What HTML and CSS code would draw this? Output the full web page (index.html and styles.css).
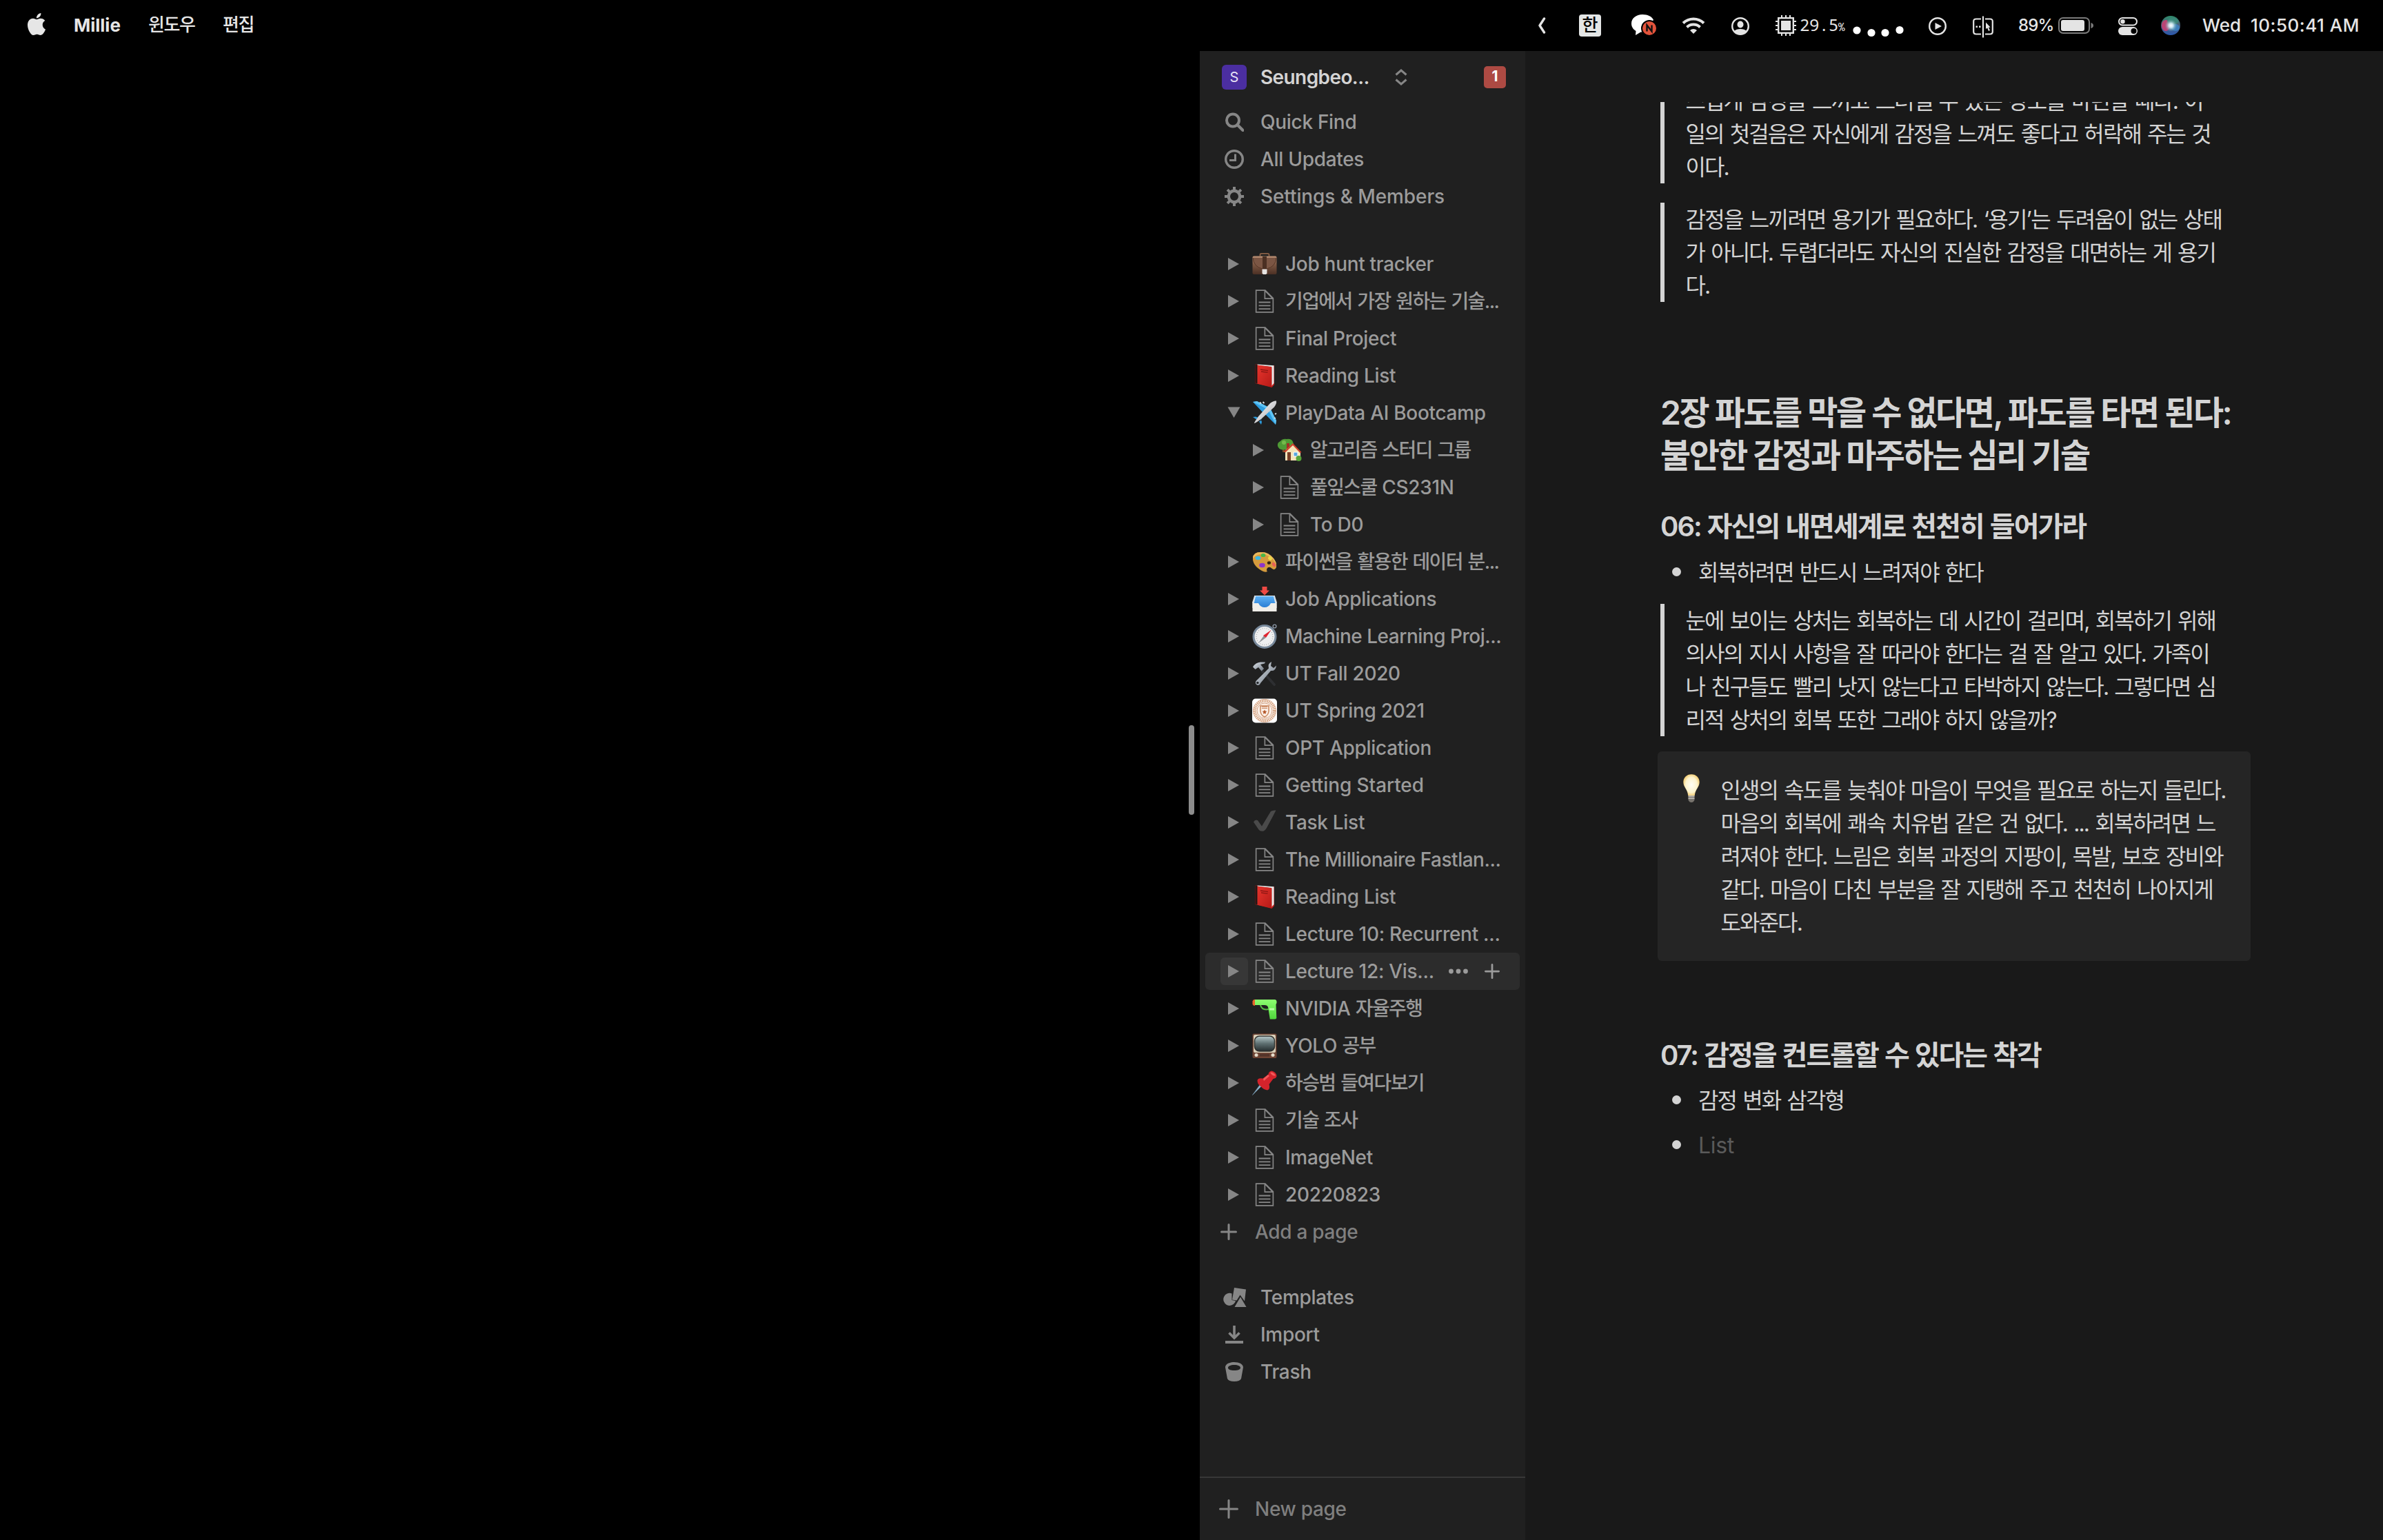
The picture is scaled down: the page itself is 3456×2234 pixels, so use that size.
FILE: index.html
```html
<!DOCTYPE html>
<html lang="ko">
<head>
<meta charset="utf-8">
<title>Millie</title>
<link rel="stylesheet" href="styles.css">
</head>
<body>
<svg class="defs" aria-hidden="true">
  <defs>
    <linearGradient id="g-case" x1="0" y1="0" x2="0" y2="1"><stop offset="0" stop-color="#b98f74"/><stop offset=".45" stop-color="#7d5843"/><stop offset="1" stop-color="#4c3024"/></linearGradient>
    <linearGradient id="g-red" x1="0" y1="0" x2="1" y2="1"><stop offset="0" stop-color="#e8352d"/><stop offset="1" stop-color="#b51a17"/></linearGradient>
    <linearGradient id="g-body" x1="0" y1="0" x2="1" y2="1"><stop offset="0" stop-color="#fff"/><stop offset="1" stop-color="#a9a9ad"/></linearGradient>
    <linearGradient id="g-tray" x1="0" y1="0" x2="0" y2="1"><stop offset="0" stop-color="#5db1f5"/><stop offset="1" stop-color="#2478d0"/></linearGradient>
    <linearGradient id="g-screen" x1="0" y1="0" x2="0" y2="1"><stop offset="0" stop-color="#b7cbcc"/><stop offset=".5" stop-color="#5d6e70"/><stop offset="1" stop-color="#252d2f"/></linearGradient>
    <linearGradient id="g-gun" x1="0" y1="0" x2="0" y2="1"><stop offset="0" stop-color="#8dff70"/><stop offset="1" stop-color="#4fd63c"/></linearGradient>
    <linearGradient id="g-steel" x1="0" y1="0" x2="1" y2="1"><stop offset="0" stop-color="#dfe5ec"/><stop offset="1" stop-color="#6b747f"/></linearGradient>
    <radialGradient id="g-bulb" cx=".5" cy=".5" r=".55"><stop offset="0" stop-color="#fffef4"/><stop offset=".65" stop-color="#fdf3cc"/><stop offset="1" stop-color="#f0c665"/></radialGradient>
    <radialGradient id="g-siri"><stop offset="0" stop-color="#fff"/><stop offset=".35" stop-color="#d7f0fa" stop-opacity=".9"/><stop offset="1" stop-color="#6aa" stop-opacity="0"/></radialGradient>
    <linearGradient id="g-siri-ring" x1="0" y1="0" x2="0" y2="1"><stop offset="0" stop-color="#2f8c6c"/><stop offset=".5" stop-color="#4a5a78"/><stop offset="1" stop-color="#2b5ab0"/></linearGradient>
  </defs>
  <symbol id="page" viewBox="0 0 30 30"><path d="M16 1H4v28h22V11L16 1zm0 2.8L23.2 11H16V3.8zM24 27.6H5.4V2.4h9.2v10H24.600v15.200zM8 17h14v-1.500H8V17zm0 4h14v-1.500H8V21zm0 4h14v-1.500H8V25z"/></symbol>
  <symbol id="closed" viewBox="0 0 40 40"><path d="M11 11l16 9-16 9z"/></symbol>
  <symbol id="open" viewBox="0 0 40 40"><path d="M10.500 11.500h18L19.500 27z"/></symbol>
  <symbol id="plus" viewBox="0 0 24 24"><path d="M12 1.500v21M1.500 12h21" fill="none" stroke="currentColor" stroke-width="3" stroke-linecap="round"/></symbol>
  <symbol id="briefcase" viewBox="0 0 36 36"><path d="M11.500 6.500V4.500Q11.500 2.800 13.500 2.800h9q2 0 2 1.700v2" fill="none" stroke="#8c6147" stroke-width="1.800"/><rect x=".5" y="6.500" width="35" height="26.500" rx="2" fill="url(#g-case)"/><path d="M1 9q1 13 14 16h6q13-3 14-16" fill="#7b5644" stroke="#573727" stroke-width="1"/><path d="M15 7h6v18h-6z" fill="#4b3023"/><path d="M14.500 25.500h7v6l-1.500 1.500h-4l-1.500-1.500z" fill="#e6e4e2"/></symbol>
  <symbol id="book" viewBox="0 0 36 36"><path d="M4.500 1.500l24 2 3.500-.5v28l-3.500 4-24-6z" fill="#c21d19"/><path d="M8 1.500l23.500 1.800V29L28 33V5L6 2.500z" fill="#e3eaea"/><path d="M7 2.500l21.500 3v29L7 29.500z" fill="url(#g-red)"/><path d="M4.500 1.500l3 .5v27.500l-3-1z" fill="#251716"/><path d="M12 9l11 1.600M13 12l9.500 1.400" stroke="#8e1714" stroke-width="1.300"/></symbol>
  <symbol id="plane" viewBox="0 0 36 36"><path d="M1 2l6-1 17 9-7 9zM34 35l1-6-9-18-9 7zM1 24l4-.5 9 3-3 4zM13 35l1-4-4-9-3 4z" fill="#2e9ee0"/><path d="M1 2l6-1 17 9-3 2zM34 35l1-6-9-18-2 4z" fill="#5fc4f5"/><path d="M11 2.500l2 2M15.500 2l2 2M33 20l2-1.500M32 25l2 1" stroke="#d9e0e4" stroke-width="1.800"/><path d="M3 33q0-2 7-11L26 4q5-4 9-3.500.8 4-3 9L14 26Q5 33 3 33z" fill="url(#g-body)"/></symbol>
  <symbol id="house" viewBox="0 0 36 36"><path d="M7 8h3l2 13H8z" fill="#7b4b28"/><path d="M1 12q-1-5 4-7 3-4 9-3 7-1 9 4 3 6-2 9-3 3-9 2-9 2-11-5z" fill="#4f9a35"/><circle cx="10" cy="7" r="3" fill="#75b94b"/><path d="M14 8h4v7l-4 4z" fill="#a22f25"/><path d="M12 18l11-9 11 11v13H12z" fill="#f5e3b8"/><path d="M10 20L23 8l12.500 13-2 1L23 11 12 21.500z" fill="#cf402c"/><path d="M15 21h5v12h-5z" fill="#7a3f26"/><path d="M24 21h6v6h-6z" fill="#5aa7de" stroke="#fff" stroke-width="1"/><circle cx="31.500" cy="30" r="4" fill="#58a438"/></symbol>
  <symbol id="palette" viewBox="0 0 36 36"><path d="M1 12Q2 4 12 4q11-1 19 9 5 7 4 13-2 5-6 2-4-4-7-1-2 3 0 5-3 2-8-1Q0 23 1 12z" fill="#d59b3d"/><path d="M1 12Q2 4 12 4q11-1 19 9 4 5 4 9-5-10-15-14T1 13z" fill="#e9b75c"/><ellipse cx="24.500" cy="19.500" rx="2.600" ry="2.300" fill="#33230f"/><ellipse cx="8.500" cy="12.500" rx="4" ry="2.800" fill="#3db8e4"/><ellipse cx="16" cy="8.500" rx="3.300" ry="2.600" fill="#46b749"/><ellipse cx="26" cy="13" rx="3" ry="2.600" fill="#ecd84a" transform="rotate(40 26 13)"/><ellipse cx="31.500" cy="22" rx="3.500" ry="2.200" fill="#e86056" transform="rotate(55 31.500 22)"/><ellipse cx="14.500" cy="23" rx="4.300" ry="3.300" fill="#8e35c9"/></symbol>
  <symbol id="tray" viewBox="0 0 36 36"><path d="M14.500 0h7v5.500h3.500L18 12.500 11 5.500h3.500z" fill="#f04a44"/><path d="M4 13h28l3.500 12v6H.5v-6z" fill="#dfeaf3"/><path d="M5 14h26l2.500 11L26 32H10l-7.500-7z" fill="url(#g-tray)"/><path d="M.5 24H9q3 6 9 6t9-6h8.500v12H.5z" fill="#f0eee9"/><path d="M4 13L.5 24M32 13l3.500 11" stroke="#d5dde3" stroke-width="1.500"/></symbol>
  <symbol id="compass" viewBox="0 0 36 36"><circle cx="32.500" cy="3.500" r="2.400" fill="none" stroke="#8b97a5" stroke-width="1.400"/><circle cx="18" cy="18.500" r="16" fill="#eeeff0" stroke="#78899b" stroke-width="3"/><circle cx="18" cy="18.500" r="12" fill="none" stroke="#aaa" stroke-width="1.500" stroke-dasharray=".8 2.300"/><path d="M9 28l8-11 3 3z" fill="#8e9297"/><path d="M27.500 9L20 20l-4-3z" fill="#e02430"/></symbol>
  <symbol id="tools" viewBox="0 0 36 36"><path d="M15 15L32 34" stroke="#2e2f32" stroke-width="3.800" stroke-linecap="round"/><path d="M12 5l5 6-3.500 3.500L9 9l-4.500 3L1 8.500Q5 2 12 1.500h7l-1 2z" fill="url(#g-steel)"/><path d="M28 1q-6 3-4 9.500L5.500 29q-2 4.500 2.500 6 3 0 4-3l15-18q7 1 8-7.500l-4 3.500-4-3z" fill="url(#g-steel)"/><circle cx="7.800" cy="31.500" r="1.800" fill="#23262a"/></symbol>
  <symbol id="seal" viewBox="0 0 36 36"><rect y=".5" width="36" height="35" rx="5" fill="#fff"/><circle cx="18" cy="18" r="14.200" fill="none" stroke="#d8a583" stroke-width="4.500" stroke-dasharray="1.600 .9"/><circle cx="18" cy="18" r="16.600" fill="none" stroke="#d5a17f" stroke-width=".7"/><circle cx="18" cy="18" r="11" fill="#fbeee5" stroke="#c98e69" stroke-width=".8"/><path d="M12 11h12v8q-1 6-6 8-5-2-6-8z" fill="none" stroke="#c68055" stroke-width="1.400"/><path d="M14 12.500h8M14 14.500h8" stroke="#ca8b65"/><path d="M18 16.500l1 2.100 2.300.3-1.700 1.600.4 2.300-2-1.100-2 1.100.4-2.300-1.700-1.600 2.300-.3z" fill="#b5582a"/></symbol>
  <symbol id="check" viewBox="0 0 36 36"><path d="M2 17.500q2-4 6-2.500l6 8.500L27 2q3-2 7.500-1.500Q28 13 21 26q-3 5-6 4.800-4 .2-5.500-2.300z" fill="#4a4a4a"/></symbol>
  <symbol id="pistol" viewBox="0 0 36 36"><path d="M12 13q2 8 12 6" fill="none" stroke="#55b944" stroke-width="2"/><path d="M3 5h30q3 .5 2.500 5l-1 2 .8 20q-1 2-4 1.500h-5.500L23 16q-1-3-5-3H3z" fill="url(#g-gun)"/><path d="M4 4.800Q1 5 .5 7.500v4Q1 14 4 14z" fill="#e9652b"/><path d="M25 17.500h7v3h-7z" fill="#b8ffa4"/></symbol>
  <symbol id="tv" viewBox="0 0 36 36"><rect x=".5" y=".5" width="35" height="35.500" rx="2" fill="#6d4434"/><rect x="2" y="2" width="32" height="26" rx="2" fill="#d8cfb8"/><rect x="3.500" y="4" width="29" height="22" rx="7" fill="url(#g-screen)" stroke="#30302e" stroke-width="1.500"/><path d="M11 30h14v3.500H11z" fill="#523329"/><circle cx="6" cy="31.500" r="2.500" fill="#e4dccb"/><circle cx="30" cy="31.500" r="2.500" fill="#e4dccb"/></symbol>
  <symbol id="pin" viewBox="0 0 36 36"><path d="M15.500 20.500L.5 35.500l13-18z" fill="#8fb6cf" stroke="#6f8ea3" stroke-width=".8"/><path d="M7.500 15q0-5 8-3.500l8-6Q24 1 28.500.5q7 2 7 8-1 3-5 3.500l-6 8q2 7-2.500 8.500-6-1-9-5-5-3-5.500-8.500z" fill="#d4232b"/><path d="M26 3q4-2 8 4-4 2-8-4zM16 12l7-6 2 2-8 7z" fill="#f25a5b"/></symbol>
  <symbol id="bulb" viewBox="0 0 24 42"><path d="M7.500 29.500h9v8q-1.500 3.500-4.500 3.500t-4.500-3.500z" fill="#77736d"/><path d="M7.500 32h9M7.500 35h9" stroke="#c9c5bd" stroke-width="1.300"/><path d="M12 .3C5 .3.3 5.200.3 11.500.3 19 6.500 22 7.200 31h9.600C17.500 22 23.700 19 23.700 11.500 23.700 5.200 19 .3 12 .3z" fill="url(#g-bulb)"/></symbol>
</svg>

<header class="menubar">
  <svg class="apple" viewBox="0 0 24 24"><path d="M12.152 6.896c-.948 0-2.415-1.078-3.960-1.040-2.040.027-3.910 1.183-4.961 3.014-2.117 3.675-.546 9.103 1.519 12.090 1.013 1.454 2.208 3.090 3.792 3.039 1.520-.065 2.090-.987 3.935-.987 1.831 0 2.350.987 3.960.948 1.637-.026 2.676-1.480 3.676-2.948 1.156-1.688 1.636-3.325 1.662-3.415-.039-.013-3.182-1.221-3.220-4.857-.026-3.040 2.480-4.494 2.597-4.559-1.429-2.090-3.623-2.324-4.390-2.376-2-.156-3.675 1.090-4.610 1.090zM15.530 3.830c.843-1.012 1.400-2.427 1.245-3.830-1.207.052-2.662.805-3.532 1.818-.780.896-1.454 2.338-1.273 3.714 1.338.104 2.715-.688 3.559-1.701"/></svg>
  <span class="app-name">Millie</span>
  <span class="menu-ko menu-window">윈도우</span>
  <span class="menu-ko menu-edit">편집</span>
  <div class="status">
    <svg class="s-chevron" viewBox="0 0 12 24"><path d="M9.500 2L3 12l6.500 10" fill="none" stroke="#e4e4e4" stroke-width="3.400" stroke-linecap="round" stroke-linejoin="round"/></svg>
    <span class="s-hangul">한</span>
    <svg class="s-chat" viewBox="0 0 38 34"><path d="M16 1C7 1 0 6.500 0 14c0 4.500 2 8 6.500 11L6 31l7.500-4.500h3L32 9C30 4 24 1 16 1z" fill="#fff"/><circle cx="26" cy="21" r="12" fill="#000"/><circle cx="26" cy="21" r="10" fill="#e2533b"/><path d="M22.500 25.500v-9l7 9v-9" fill="none" stroke="#111" stroke-width="2.400"/></svg>
    <svg class="s-wifi" viewBox="0 0 34 26"><g fill="none" stroke="#e4e4e4" stroke-width="4"><path d="M2 9.500a21.500 21.500 0 0 1 30 0"/><path d="M7.500 15.500a13.500 13.500 0 0 1 19 0"/></g><path d="M17 25l-5-5a7 7 0 0 1 10 0z" fill="#e4e4e4"/></svg>
    <svg class="s-user" viewBox="0 0 26 26"><circle cx="13" cy="13" r="11.800" fill="none" stroke="#e4e4e4" stroke-width="2.400"/><ellipse cx="13" cy="10.500" rx="4.500" ry="5" fill="#e4e4e4"/><path d="M4 20q3-3 9-3t9 3q-3.500 4.500-9 4.500T4 20z" fill="#e4e4e4"/></svg>
    <svg class="s-cpu" viewBox="0 0 30 30"><path d="M9 0v5M15 0v5M21 0v5M9 25v5M15 25v5M21 25v5M0 9h5M0 15h5M0 21h5M25 9h5M25 15h5M25 21h5" stroke="#e4e4e4" stroke-width="2"/><rect x="4.200" y="4.200" width="21.600" height="21.600" fill="none" stroke="#e4e4e4" stroke-width="2.400"/><rect x="8" y="8" width="14" height="14" fill="#e4e4e4"/></svg>
    <span class="s-load">29.5<small>%</small></span>
    <svg class="s-dots" viewBox="0 0 74 20"><g fill="#fff"><circle cx="6" cy="9" r="5.600"/><circle cx="27" cy="12.500" r="5.600"/><circle cx="47" cy="12.500" r="5.600"/><circle cx="68" cy="8.500" r="5.600"/></g></svg>
    <svg class="s-play" viewBox="0 0 26 26"><circle cx="13" cy="13" r="11.800" fill="none" stroke="#e4e4e4" stroke-width="2.400"/><path d="M9.500 8l9.500 5-9.500 5z" fill="#e4e4e4"/></svg>
    <svg class="s-split" viewBox="0 0 30 32"><path d="M12 4.500H5Q1.200 4.500 1.200 8v15q0 3.500 3.800 3.500h7M18 4.500h7q3.800 0 3.800 3.500v15q0 3.500-3.800 3.500h-7" fill="none" stroke="#e4e4e4" stroke-width="2.200"/><path d="M15 .5v31" stroke="#e4e4e4" stroke-width="2.200"/><path d="M4.500 14.500h2.500v2.500H4.500zM9 14.500h2.500v2.500H9zM19 9.500l6.500 7-2.500.5 2 4-2 1-1.800-4.500L19 19z" fill="#e4e4e4"/></svg>
    <span class="s-pct">89%</span>
    <svg class="s-battery" viewBox="0 0 52 24"><rect x="1" y="1" width="44" height="22" rx="6" fill="none" stroke="#7b7b7b" stroke-width="2"/><rect x="4" y="4" width="34" height="16" rx="3" fill="#e4e4e4"/><path d="M47.500 8q3.500 1 3.500 4t-3.500 4z" fill="#7b7b7b"/></svg>
    <svg class="s-control" viewBox="0 0 28 26"><rect x="1" y="1" width="26" height="10.500" rx="5.250" fill="none" stroke="#e4e4e4" stroke-width="2"/><circle cx="6.500" cy="6.250" r="3.200" fill="#e4e4e4"/><rect y="14" width="28" height="12" rx="6" fill="#e4e4e4"/><circle cx="22.500" cy="20" r="4" fill="#000"/></svg>
    <svg class="s-siri" viewBox="0 0 28 28"><circle cx="14" cy="14" r="14" fill="url(#g-siri-ring)"/><ellipse cx="7" cy="14" rx="6" ry="8" fill="#d13f74" opacity=".85"/><ellipse cx="17" cy="8" rx="8" ry="5" fill="#3b8f7c" opacity=".7"/><ellipse cx="21" cy="17" rx="6" ry="5" fill="#3b86c8" opacity=".8"/><circle cx="14.500" cy="14" r="9" fill="url(#g-siri)"/></svg>
    <span class="s-day">Wed</span>
    <span class="s-time">10:50:41 AM</span>
  </div>
</header>

<div class="screen">
  <section class="reader"><div class="grip"></div></section>

  <nav class="sidebar">
    <div class="workspace">
      <span class="avatar">S</span>
      <span class="ws-name">Seungbeo...</span>
      <svg class="ws-arrows" viewBox="0 0 18 24"><path d="M1.500 8.500L9 2l7.500 6.500M1.500 15.500L9 22l7.500-6.500" fill="none" stroke="#868686" stroke-width="3"/></svg>
      <span class="badge">1</span>
    </div>
    <div class="row action"><svg viewBox="0 0 28 28"><circle cx="12" cy="11.500" r="9" fill="none" stroke="currentColor" stroke-width="4"/><path d="M18.500 18l8 8" stroke="currentColor" stroke-width="4.200" stroke-linecap="round"/></svg><span>Quick Find</span></div>
    <div class="row action"><svg viewBox="0 0 28 28"><circle cx="14" cy="14" r="12.300" fill="none" stroke="currentColor" stroke-width="3.400"/><path d="M15.500 6.500v9H7" fill="none" stroke="currentColor" stroke-width="3"/></svg><span>All Updates</span></div>
    <div class="row action"><svg viewBox="0 0 28 28"><circle cx="14" cy="14" r="8.200" fill="none" stroke="currentColor" stroke-width="4.400"/><path d="M14 0v6M14 22v6M0 14h6M22 14h6M4.100 4.100l4.200 4.200M19.700 19.700l4.200 4.200M23.900 4.100l-4.200 4.200M8.300 19.700l-4.200 4.200" stroke="currentColor" stroke-width="4"/></svg><span class="roomy">Settings &amp; Members</span></div>

    <div class="tree">
      <div class="row item"><svg class="toggle"><use href="#closed"/></svg><svg class="icon"><use href="#briefcase"/></svg><span>Job hunt tracker</span></div>
      <div class="row item"><svg class="toggle"><use href="#closed"/></svg><svg class="icon"><use href="#page"/></svg><span class="ko">기업에서 가장 원하는 기술...</span></div>
      <div class="row item"><svg class="toggle"><use href="#closed"/></svg><svg class="icon"><use href="#page"/></svg><span>Final Project</span></div>
      <div class="row item"><svg class="toggle"><use href="#closed"/></svg><svg class="icon"><use href="#book"/></svg><span>Reading List</span></div>
      <div class="row item"><svg class="toggle"><use href="#open"/></svg><svg class="icon"><use href="#plane"/></svg><span>PlayData AI Bootcamp</span></div>
      <div class="row item child"><svg class="toggle"><use href="#closed"/></svg><svg class="icon"><use href="#house"/></svg><span class="ko">알고리즘 스터디 그룹</span></div>
      <div class="row item child"><svg class="toggle"><use href="#closed"/></svg><svg class="icon"><use href="#page"/></svg><span><span class="ko">풀잎스쿨 </span>CS231N</span></div>
      <div class="row item child"><svg class="toggle"><use href="#closed"/></svg><svg class="icon"><use href="#page"/></svg><span>To D0</span></div>
      <div class="row item"><svg class="toggle"><use href="#closed"/></svg><svg class="icon"><use href="#palette"/></svg><span class="ko">파이썬을 활용한 데이터 분...</span></div>
      <div class="row item"><svg class="toggle"><use href="#closed"/></svg><svg class="icon"><use href="#tray"/></svg><span>Job Applications</span></div>
      <div class="row item"><svg class="toggle"><use href="#closed"/></svg><svg class="icon"><use href="#compass"/></svg><span class="snug">Machine Learning Proj...</span></div>
      <div class="row item"><svg class="toggle"><use href="#closed"/></svg><svg class="icon"><use href="#tools"/></svg><span>UT Fall 2020</span></div>
      <div class="row item"><svg class="toggle"><use href="#closed"/></svg><svg class="icon"><use href="#seal"/></svg><span>UT Spring 2021</span></div>
      <div class="row item"><svg class="toggle"><use href="#closed"/></svg><svg class="icon"><use href="#page"/></svg><span>OPT Application</span></div>
      <div class="row item"><svg class="toggle"><use href="#closed"/></svg><svg class="icon"><use href="#page"/></svg><span class="roomy">Getting Started</span></div>
      <div class="row item"><svg class="toggle"><use href="#closed"/></svg><svg class="icon"><use href="#check"/></svg><span>Task List</span></div>
      <div class="row item"><svg class="toggle"><use href="#closed"/></svg><svg class="icon"><use href="#page"/></svg><span class="snug">The Millionaire Fastlan...</span></div>
      <div class="row item"><svg class="toggle"><use href="#closed"/></svg><svg class="icon"><use href="#book"/></svg><span>Reading List</span></div>
      <div class="row item"><svg class="toggle"><use href="#closed"/></svg><svg class="icon"><use href="#page"/></svg><span>Lecture 10: Recurrent ...</span></div>
      <div class="row item hovered"><svg class="toggle"><use href="#closed"/></svg><svg class="icon"><use href="#page"/></svg><span>Lecture 12: Vis...</span><svg class="more" viewBox="0 0 28 8"><circle cx="3.500" cy="4" r="3.400"/><circle cx="14" cy="4" r="3.400"/><circle cx="24.500" cy="4" r="3.400"/></svg><svg class="add"><use href="#plus"/></svg></div>
      <div class="row item"><svg class="toggle"><use href="#closed"/></svg><svg class="icon"><use href="#pistol"/></svg><span>NVIDIA <span class="ko">자율주행</span></span></div>
      <div class="row item"><svg class="toggle"><use href="#closed"/></svg><svg class="icon"><use href="#tv"/></svg><span>YOLO <span class="ko">공부</span></span></div>
      <div class="row item"><svg class="toggle"><use href="#closed"/></svg><svg class="icon"><use href="#pin"/></svg><span class="ko">하승범 들여다보기</span></div>
      <div class="row item"><svg class="toggle"><use href="#closed"/></svg><svg class="icon"><use href="#page"/></svg><span class="ko">기술 조사</span></div>
      <div class="row item"><svg class="toggle"><use href="#closed"/></svg><svg class="icon"><use href="#page"/></svg><span>ImageNet</span></div>
      <div class="row item"><svg class="toggle"><use href="#closed"/></svg><svg class="icon"><use href="#page"/></svg><span>20220823</span></div>
      <div class="row new"><svg class="plus"><use href="#plus"/></svg><span>Add a page</span></div>
    </div>

    <div class="extras">
      <div class="row action"><svg class="shapes" viewBox="0 0 34 28"><path d="M12.500 8.500A9 9 0 1 0 17 21.500l1-2.500-5.500-1z"/><path d="M16 0l17 2.500-2 17-6.500-9-5 8-6.500-1z"/><path d="M25 13.500L33.500 28h-17z"/></svg><span>Templates</span></div>
      <div class="row action"><svg viewBox="0 0 28 28"><path d="M14 1v17M6.500 11.500L14 19l7.500-7.500" fill="none" stroke="currentColor" stroke-width="3.600"/><path d="M1 23h26v4H1z"/></svg><span>Import</span></div>
      <div class="row action"><svg viewBox="0 0 28 28"><path fill-rule="evenodd" d="M14 0c7.500 0 13 3 13 7.500L24 24q-2 4-10 4T4 24L1 7.500C1 3 6.500 0 14 0zm0 4c-5.500 0-9 1.800-9 4.200S8.500 12 14 12s9-1.400 9-3.800S19.500 4 14 4z"/></svg><span>Trash</span></div>
    </div>

    <div class="footer row new"><svg class="plus large" viewBox="0 0 28 28"><path d="M14 1.500v25M1.500 14h25" fill="none" stroke="currentColor" stroke-width="3" stroke-linecap="round"/></svg><span>New page</span></div>
  </nav>

  <main class="document">
    <div class="scroll">
      <blockquote class="quote first">스럽게 감정을 느끼고 드러낼 수 있는 장소를 마련할 때다. 이<br>일의 첫걸음은 자신에게 감정을 느껴도 좋다고 허락해 주는 것<br>이다.</blockquote>
      <blockquote class="quote second"><span class="loose">감정을 느끼려면 용기가 필요하다. ‘용기’는 두려움이 없는 상태</span><br>가 아니다. 두렵더라도 자신의 진실한 감정을 대면하는 게 용기<br>다.</blockquote>
      <h2 class="chapter">2장 파도를 막을 수 없다면, 파도를 타면 된다:<br>불안한 감정과 마주하는 심리 기술</h2>
      <h3 class="section six">06: 자신의 내면세계로 천천히 들어가라</h3>
      <ul class="bullets one"><li>회복하려면 반드시 느려져야 한다</li></ul>
      <blockquote class="quote third">눈에 보이는 상처는 회복하는 데 시간이 걸리며, 회복하기 위해<br>의사의 지시 사항을 잘 따라야 한다는 걸 잘 알고 있다. 가족이<br>나 친구들도 빨리 낫지 않는다고 타박하지 않는다. 그렇다면 심<br>리적 상처의 회복 또한 그래야 하지 않을까?</blockquote>
      <aside class="callout">
        <svg class="bulb"><use href="#bulb"/></svg>
        <p>인생의 속도를 늦춰야 마음이 무엇을 필요로 하는지 들린다.<br>마음의 회복에 쾌속 치유법 같은 건 없다. ... 회복하려면 느<br>려져야 한다. 느림은 회복 과정의 지팡이, 목발, 보호 장비와<br>같다. 마음이 다친 부분을 잘 지탱해 주고 천천히 나아지게<br>도와준다.</p>
      </aside>
      <h3 class="section seven">07: 감정을 컨트롤할 수 있다는 착각</h3>
      <ul class="bullets two"><li>감정 변화 삼각형</li><li class="placeholder"><span>List</span></li></ul>
    </div>
  </main>
</div>
</body>
</html>
```
FILE: styles.css
```css
* { box-sizing: border-box; }

body {
  margin: 0;
  width: 3456px;
  height: 2234px;
  display: flex;
  flex-direction: column;
  overflow: hidden;
  background: #000;
  color: #d4d4d4;
  font-family: Inter, "Noto Sans CJK KR", sans-serif;
  white-space: nowrap;
}

svg { display: block; flex: none; fill: currentColor; }
.defs { position: absolute; width: 0; height: 0; }

/* Menu bar */
.menubar {
  flex: none;
  height: 74px;
  padding: 0 35px 0 37px;
  display: flex;
  align-items: center;
  color: #e6e6e6;
  font-size: 26px;
  line-height: 72px;
  font-weight: 500;
}
.apple { width: 32px; height: 32px; margin-top: -4px; }
.app-name { width: 108px; margin-left: 38px; font-weight: 700; }
.menu-ko { letter-spacing: -1.4px; margin-top: -3px; }
.menu-window { width: 108px; }
.status { margin-left: auto; height: 74px; display: flex; align-items: center; }
.s-chevron { width: 12px; height: 24px; }
.s-hangul {
  width: 32px; height: 32px; margin-left: 48px;
  border-radius: 4px; background: #e4e6e6; color: #000;
  font-size: 25px; line-height: 30px; text-align: center;
}
.s-chat { width: 38px; height: 34px; margin-left: 44px; }
.s-wifi { width: 34px; height: 26px; margin-left: 35px; }
.s-user { width: 26px; height: 26px; margin: 2px 0 0 38px; }
.s-cpu { width: 30px; height: 30px; margin-left: 38px; }
.s-load { width: 71px; margin-left: 5px; font-family: "Noto Sans Mono", "DejaVu Sans Mono", monospace; font-size: 24px; font-weight: 400; letter-spacing: -0.4px; }
.s-load small { font-size: 16px; }
.s-dots { width: 74px; height: 20px; margin: 15px 0 0 6px; }
.s-play { width: 26px; height: 26px; margin: 2px 0 0 36px; }
.s-split { width: 30px; height: 32px; margin: 3px 0 0 38px; }
.s-pct { width: 52px; margin-left: 36px; font-size: 24px; letter-spacing: -0.8px; }
.s-battery { width: 52px; height: 24px; margin-left: 6px; }
.s-control { width: 28px; height: 26px; margin: 2px 0 0 35px; }
.s-siri { width: 28px; height: 28px; margin-left: 34px; }
.s-day { width: 70px; margin-left: 32px; }
.s-time { width: 157px; letter-spacing: 0.5px; }

/* Panes */
.screen { flex: 1; min-height: 0; display: flex; }
.reader { width: 1740px; padding: 978px 8px 0 0; display: flex; justify-content: flex-end; }
.grip { width: 8px; height: 130px; border-radius: 4px; background: #8c8c8c; }

/* Sidebar */
.sidebar {
  width: 472px;
  background: #202020;
  display: flex;
  flex-direction: column;
  color: #9b9b9b;
  font-size: 28px;
  font-weight: 550;
}
.workspace { height: 76px; padding: 0 28px 0 32px; display: flex; align-items: center; }
.avatar {
  width: 36px; height: 36px; border-radius: 6px;
  background: #4b2ea1; color: #e6e0f5;
  font-size: 20px; line-height: 37px; font-weight: 400; text-align: center;
}
.ws-name { width: 195px; margin-left: 20px; color: #d4d4d4; font-weight: 600; letter-spacing: -0.6px; }
.ws-arrows { width: 18px; height: 24px; }
.badge {
  width: 32px; height: 32px; margin-left: auto; border-radius: 5px;
  background: #ad4a43; color: #fff;
  font-size: 21px; line-height: 30px; font-weight: 700; text-align: center;
}
.row { height: 54px; line-height: 54px; display: flex; align-items: center; flex: none; letter-spacing: -0.3px; }
.row svg { color: #868686; }
.roomy { letter-spacing: -0.1px; }
.snug { letter-spacing: -0.5px; }
.action { padding-left: 36px; }
.action svg { width: 28px; height: 28px; margin-right: 24px; }
.action .shapes { width: 34px; margin: 0 20px 0 -2px; }
.tree { padding: 44px 8px 0; }
.item { padding-left: 22px; border-radius: 6px; }
.child { padding-left: 58px; }
.toggle { width: 40px; height: 40px; border-radius: 6px; }
.icon { width: 36px; height: 36px; margin: 0 12px 0 6px; }
.ko { font-weight: 500; letter-spacing: -1.6px; word-spacing: 1.8px; }
.hovered { background: #2c2c2c; }
.hovered .toggle { background: #373737; }
.hovered .more { width: 28px; height: 8px; margin: 0 24px 0 auto; color: #9b9b9b; }
.hovered .add { width: 22px; height: 22px; margin-right: 29px; color: #9b9b9b; }
.new { padding-left: 22px; color: #7f7f7f; }
.plus { width: 24px; height: 24px; margin-right: 26px; }
.extras { padding-top: 41px; }
.footer { height: 92px; margin-top: auto; padding-left: 28px; border-top: 2px solid #373737; }
.plus.large { width: 28px; height: 28px; margin-right: 24px; }

/* Document */
.document { flex: 1; background: #191919; padding-top: 74px; }
.scroll {
  height: 2086px; overflow: hidden; padding-left: 192px;
  font-size: 32px; line-height: 48px;
  letter-spacing: -1.9px; word-spacing: 2px;
}
.quote { height: 144px; margin: 0 0 0 4px; padding: 1px 0 0 30.5px; border-left: 6px solid #d4d4d4; }
.first { margin-top: -26px; }
.second { margin-top: 28px; }
.third { height: 192px; margin-top: 21px; }
.loose { letter-spacing: -1.75px; }
.chapter { margin: 130px 0 0 4px; font-size: 48px; line-height: 62.4px; font-weight: 600; letter-spacing: -2.5px; word-spacing: 0; }
.section { margin: 0 0 0 4px; font-size: 40px; line-height: 52px; font-weight: 600; letter-spacing: -2px; word-spacing: 1px; }
.six { margin-top: 45px; }
.seven { margin-top: 111px; }
.bullets { margin: 0 0 0 21px; padding: 0; list-style: none; }
.bullets.one { margin-top: 17px; }
.bullets.two { margin-top: 16px; }
.bullets li { display: flex; align-items: center; height: 48px; }
.bullets li + li { margin-top: 17px; }
.bullets li::before { content: ""; width: 13px; height: 13px; margin: -2px 25px 0 0; border-radius: 50%; background: #d4d4d4; }
.placeholder span { color: #5a5a5a; letter-spacing: -0.3px; }
.callout { width: 860px; height: 304px; margin-top: 22px; padding: 33px 0 0 37px; display: flex; background: #252525; border-radius: 6px; }
.bulb { width: 24px; height: 42px; margin-right: 30.5px; }
.callout p { margin: 0; }
```
